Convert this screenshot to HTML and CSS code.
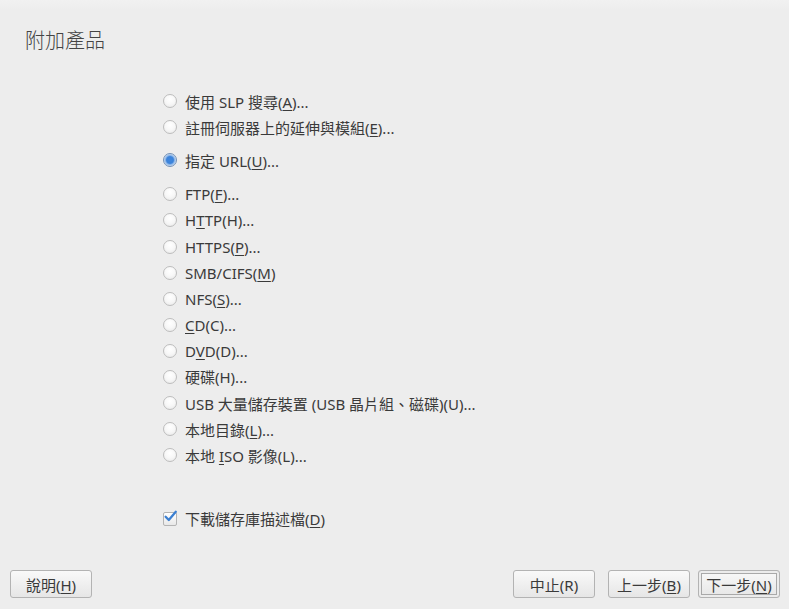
FILE: index.html
```html
<!DOCTYPE html>
<html lang="zh-Hant">
<head>
<meta charset="utf-8">
<link rel="stylesheet" href="styles.css">
</head>
<body>
<div class="window">
  <h1 class="title">附加產品</h1>
  <div class="options">
    <div class="group">
      <label class="opt"><span class="radio"></span><span>使用 SLP 搜尋(<u>A</u>)...</span></label>
      <label class="opt"><span class="radio"></span><span>註冊伺服器上的延伸與模組(<u>E</u>)...</span></label>
    </div>
    <div class="group">
      <label class="opt"><span class="radio on"></span><span>指定 URL(<u>U</u>)...</span></label>
    </div>
    <div class="group">
      <label class="opt"><span class="radio"></span><span>FTP(<u>F</u>)...</span></label>
      <label class="opt"><span class="radio"></span><span>H<u>T</u>TP(H)...</span></label>
      <label class="opt"><span class="radio"></span><span>HTTPS(<u>P</u>)...</span></label>
      <label class="opt"><span class="radio"></span><span>SMB/CIFS(<u>M</u>)</span></label>
      <label class="opt"><span class="radio"></span><span>NFS(<u>S</u>)...</span></label>
      <label class="opt"><span class="radio"></span><span><u>C</u>D(C)...</span></label>
      <label class="opt"><span class="radio"></span><span>D<u>V</u>D(D)...</span></label>
      <label class="opt"><span class="radio"></span><span>硬碟(H)...</span></label>
      <label class="opt"><span class="radio"></span><span>USB 大量儲存裝置 (USB 晶片組、磁碟)(U)...</span></label>
      <label class="opt"><span class="radio"></span><span>本地目錄(<u>L</u>)...</span></label>
      <label class="opt"><span class="radio"></span><span>本地 <u>I</u>SO 影像(L)...</span></label>
    </div>
  </div>
  <div class="checkrow">
    <label class="opt"><span class="check"><svg width="15" height="13" viewBox="0 0 15 13"><path d="M2.6 6.8 L5.8 10 L12.8 1.8" fill="none" stroke="#3b7fd1" stroke-width="2.3" stroke-linecap="round" stroke-linejoin="round"/></svg></span><span>下載儲存庫描述檔(<u>D</u>)</span></label>
  </div>
  <div class="footer">
    <button class="btn">說明(<u>H</u>)</button>
    <div class="spacer"></div>
    <button class="btn">中止(R)</button>
    <button class="btn">上一步(<u>B</u>)</button>
    <button class="btn default">下一步(<u>N</u>)</button>
  </div>
</div>
</body>
</html>
```

FILE: styles.css
```css
* { box-sizing: border-box; }
html, body {
  margin: 0;
  padding: 0;
  width: 789px;
  height: 609px;
  overflow: hidden;
}
body {
  background: #ededed;
  font-family: "Noto Sans", "Noto Sans CJK TC", sans-serif;
  color: #3a3a3a;
  font-size: 15px;
}
.window {
  height: 609px;
  display: flex;
  flex-direction: column;
  background: linear-gradient(#f1f1f1 0, #ededed 10px);
}
.title {
  margin: 0;
  padding: 28px 0 0 25px;
  font-family: "Noto Sans CJK TC", sans-serif;
  font-weight: 300;
  font-size: 20px;
  line-height: 24px;
  color: #444;
}
.options {
  padding: 36px 0 0 163px;
  display: flex;
  flex-direction: column;
}
.group {
  display: flex;
  flex-direction: column;
}
.group + .group { margin-top: 7px; }
.group + .group + .group { margin-top: 8px; }
.checkrow {
  padding: 37.5px 0 0 163px;
}
.opt {
  display: flex;
  align-items: center;
  height: 26.1px;
  gap: 8px;
  white-space: nowrap;
}
u { text-decoration: underline; text-underline-offset: 2px; text-decoration-thickness: 1px; }
.radio {
  width: 14px;
  height: 14px;
  border-radius: 50%;
  border: 1px solid #bdbdbd;
  background: radial-gradient(circle at 50% 35%, #ffffff 0, #f7f7f7 50%, #e6e6e6 100%);
  flex: none;
}
.radio.on {
  border-color: #7390b5;
  background: radial-gradient(circle at 50% 50%, #3f86dd 0, #3a82da 40%, #8fb8ea 55%, #d7e4f3 75%, #eef2f7 100%);
}
.check {
  width: 14px;
  height: 14px;
  border: 1px solid #b4b4b4;
  border-radius: 2px;
  background: linear-gradient(#ffffff, #e8e8e8);
  position: relative;
  flex: none;
}
.check svg {
  position: absolute;
  left: -1px;
  top: -3px;
}
.footer {
  margin-top: auto;
  display: flex;
  align-items: center;
  padding: 0 9px 11px 10px;
  gap: 13px;
}
.spacer { flex: 1; }
.btn {
  width: 82px;
  height: 28px;
  font-family: "Noto Sans", "Noto Sans CJK TC", sans-serif;
  font-size: 15px;
  color: #3a3a3a;
  border: 1px solid #b3b3b3;
  border-radius: 3px;
  background: linear-gradient(#f9f9f9, #e6e6e6);
  padding: 0;
}
.btn.default {
  margin-left: -5px;
  box-shadow: inset 0 0 0 2px #ececec, inset 0 0 0 3px #a9a9a9;
}
```
